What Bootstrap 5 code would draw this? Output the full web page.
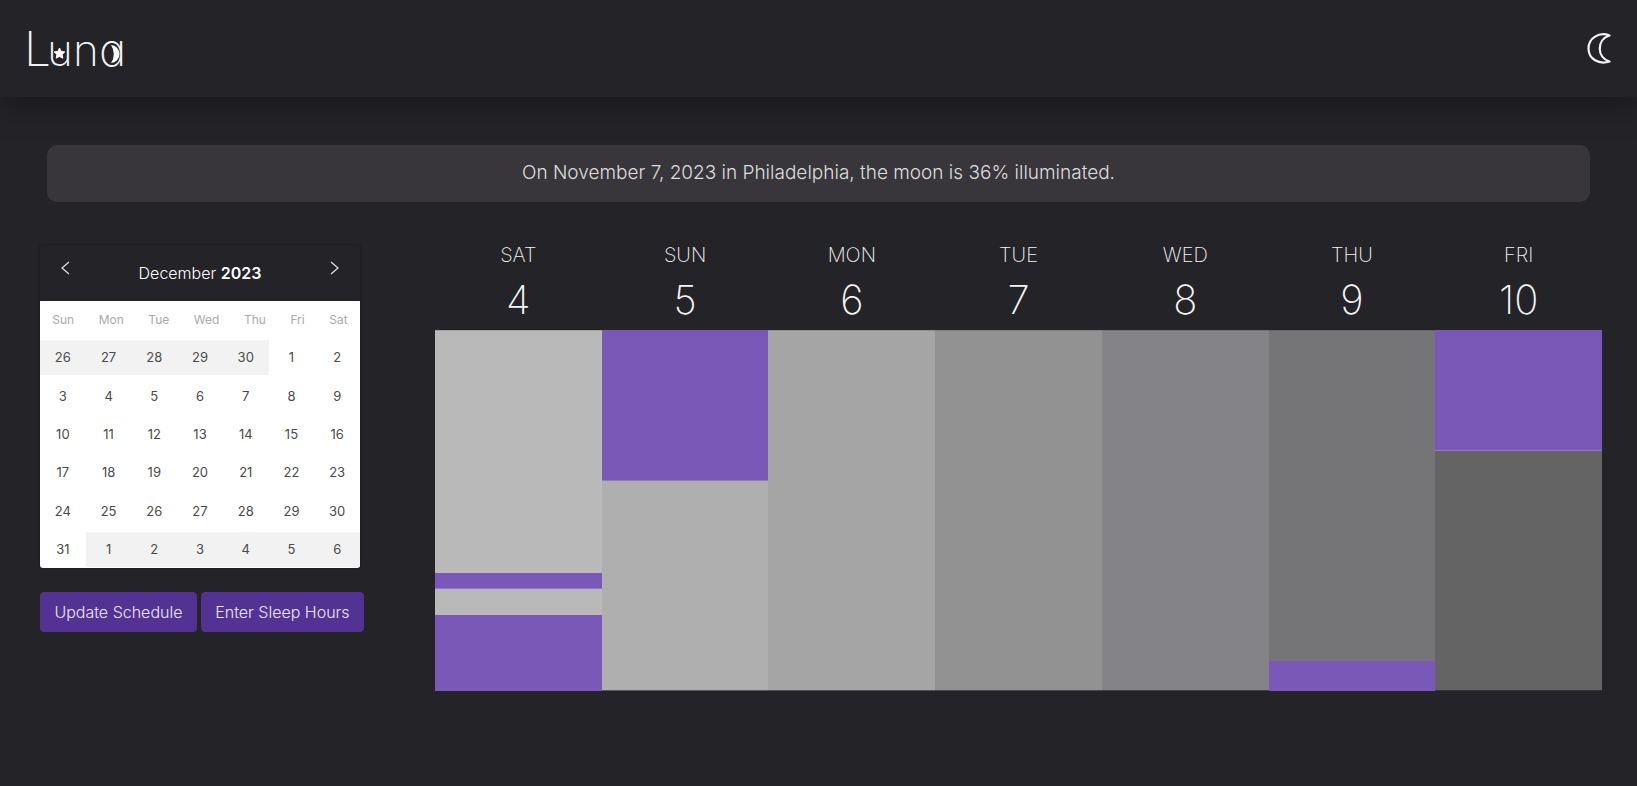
<!DOCTYPE html>
<html lang="en">
<head>
<meta charset="utf-8">
<meta name="viewport" content="width=device-width, initial-scale=1">
<title>Luna</title>
<link href="https://cdn.jsdelivr.net/npm/bootstrap@5.3.0/dist/css/bootstrap.min.css" rel="stylesheet">
<style>
  :root { --ink: #242328; --violet: #7958b7; }
  body { background: var(--ink); color: #f4f4f4; font-family: Inter, "Liberation Sans", sans-serif; }

  .topbar { height: 97px; padding: 0 24px; box-shadow: 0 4px 36px rgba(0, 0, 0, .4); background: var(--ink); }
  .theme-toggle { margin-right: -4px; }
  .brand-text { font-family: Inter, sans-serif; font-feature-settings: "cv11"; font-weight: 200; fill: #f2f2f2; }

  .notice { margin: 48px 47px 0; padding: 13px 14px 15px; border-radius: 10px; background: #38363b; font-size: 19px; line-height: 29px; font-weight: 300; color: #dedede; }

  .board { padding: 41px 35px 0 40px; gap: 71px; }
  .side { width: 324px; }
  .month { width: 320px; margin-top: 2px; border-radius: 3px; overflow: hidden; box-shadow: 0 0 2px rgba(0, 0, 0, .5); }
  .month-head { height: 56px; padding: 0 16px; }
  .month-head h2 { font-size: 16px; line-height: 20px; margin: 18px 0 0; font-weight: 300; color: #fff; }
  .month-head h2 b { font-weight: 600; }
  .arrow { width: 20px; height: 20px; margin-top: 13px; }

  .days, .days thead, .days tbody { display: block; width: 100%; }
  .days { background: #fff; color: #4a4a4a; font-size: 13px; line-height: 35px; text-align: center; }
  .days thead tr { display: flex; justify-content: space-around; height: 39px; }
  .days th { font-size: 12px; font-weight: 400; color: #aaa; }
  .days tbody tr { display: flex; height: 38px; }
  .days tbody tr:nth-child(3n + 1) { height: 39px; }
  .days tbody tr:last-child { height: 36px; }
  .days td { flex: 1 1 0; height: 35px; padding: 0; }
  .days .off { background: #f2f2f2; }

  .btn-luna { --bs-btn-bg: #523394; --bs-btn-border-color: #523394; --bs-btn-color: #ece6f5; --bs-btn-hover-bg: #6140a8; --bs-btn-hover-color: #fff;
    --bs-btn-padding-x: 12px; --bs-btn-padding-y: 9px; --bs-btn-border-radius: 4px; --bs-btn-line-height: 20px; font-size: 16px; font-weight: 300; white-space: nowrap; }

  .day-name { font-size: 20px; line-height: 24px; font-weight: 200; margin: 0; }
  .day-num { font-size: 40px; line-height: 48px; font-weight: 200; margin: 9px 0 6px; }
  .track { height: 361px; }
  .awake, .sleep { flex-basis: 0; }
  .awake { background: var(--tone); }
  .awake:first-child { border-top: 1px solid rgba(0, 0, 0, .12); }
  .awake:last-child { border-bottom: 1px solid rgba(0, 0, 0, .5); }
  .sleep { background: var(--violet); }
  .sleep:not(:last-child) { border-bottom: 1px solid rgba(255, 255, 255, .2); }
  .tone-1 { --tone: #b9b9b9; } .tone-2 { --tone: #afafaf; } .tone-3 { --tone: #a5a5a5; } .tone-4 { --tone: #929293; }
  .tone-5 { --tone: #848388; } .tone-6 { --tone: #757577; } .tone-7 { --tone: #646465; }
</style>
</head>
<body>
<header class="topbar d-flex align-items-center justify-content-between">
  <a href="#" class="d-block" aria-label="Luna home">
    <svg class="d-block" width="110" height="81" viewBox="0 0 110 81" role="img" aria-label="Luna">
      <g class="brand-text">
        <text x="0" y="58" font-size="48">L</text>
        <text x="23" y="58" font-size="44">u</text>
        <text x="49" y="58" font-size="44">n</text>
        <text x="75" y="58" font-size="46">a</text>
      </g>
      <path fill="#fff" stroke="#fff" stroke-linejoin="round" d="M35.500 40l1.600 3.400 3.700.5-2.700 2.600.7 3.700-3.300-1.800-3.300 1.800.7-3.700-2.700-2.600 3.700-.5z"/>
      <path fill="#fff" d="M87 37a8.500 9 0 0 1 0 18a14 15 0 0 0 0-18z"/>
    </svg>
  </a>
  <button type="button" class="theme-toggle btn p-0 border-0" aria-label="Toggle theme">
    <svg class="d-block" width="30" height="34" viewBox="0 0 30 34" fill="none" stroke="#f4f4f4" stroke-width="2.200" stroke-linejoin="round">
      <path d="M22.500 3.500C12-.5 1.500 6 1.500 16.500S12 33 22.500 29.500C9.500 25.500 9.500 7.500 22.500 3.500z"/>
    </svg>
  </button>
</header>

<main>
  <p class="notice text-center">On November 7, 2023 in Philadelphia, the moon is 36% illuminated.</p>

  <div class="board d-flex align-items-start">
    <section class="side flex-shrink-0">
      <div class="month">
        <div class="month-head d-flex justify-content-between align-items-start">
          <button type="button" class="btn p-0 border-0 arrow" aria-label="Previous month">
            <svg class="d-block" width="20" height="20" fill="none" stroke="#e4e4e4" stroke-width="1.200"><path d="M13 4L6 10l7 6"/></svg>
          </button>
          <h2>December <b>2023</b></h2>
          <button type="button" class="btn p-0 border-0 arrow" aria-label="Next month">
            <svg class="d-block" width="20" height="20" fill="none" stroke="#e4e4e4" stroke-width="1.200"><path d="M7 4l7 6-7 6"/></svg>
          </button>
        </div>
        <table class="days">
          <thead><tr><th>Sun</th><th>Mon</th><th>Tue</th><th>Wed</th><th>Thu</th><th>Fri</th><th>Sat</th></tr></thead>
          <tbody>
            <tr><td class="off">26</td><td class="off">27</td><td class="off">28</td><td class="off">29</td><td class="off">30</td><td>1</td><td>2</td></tr>
            <tr><td>3</td><td>4</td><td>5</td><td>6</td><td>7</td><td>8</td><td>9</td></tr>
            <tr><td>10</td><td>11</td><td>12</td><td>13</td><td>14</td><td>15</td><td>16</td></tr>
            <tr><td>17</td><td>18</td><td>19</td><td>20</td><td>21</td><td>22</td><td>23</td></tr>
            <tr><td>24</td><td>25</td><td>26</td><td>27</td><td>28</td><td>29</td><td>30</td></tr>
            <tr><td>31</td><td class="off">1</td><td class="off">2</td><td class="off">3</td><td class="off">4</td><td class="off">5</td><td class="off">6</td></tr>
          </tbody>
        </table>
      </div>
      <div class="d-flex gap-1 mt-4">
        <button type="button" class="btn btn-luna flex-fill">Update Schedule</button>
        <button type="button" class="btn btn-luna flex-fill">Enter Sleep Hours</button>
      </div>
    </section>

    <section class="row g-0 flex-grow-1 text-center">
      <div class="col tone-1"><h3 class="day-name">SAT</h3><p class="day-num">4</p>
        <div class="track d-flex flex-column"><div class="awake" style="flex-grow:243"></div><div class="sleep" style="flex-grow:15"></div><div class="awake" style="flex-grow:26"></div><div class="sleep" style="flex-grow:76"></div></div></div>
      <div class="col tone-2"><h3 class="day-name">SUN</h3><p class="day-num">5</p>
        <div class="track d-flex flex-column"><div class="sleep" style="flex-grow:151"></div><div class="awake" style="flex-grow:210"></div></div></div>
      <div class="col tone-3"><h3 class="day-name">MON</h3><p class="day-num">6</p>
        <div class="track d-flex flex-column"><div class="awake" style="flex-grow:361"></div></div></div>
      <div class="col tone-4"><h3 class="day-name">TUE</h3><p class="day-num">7</p>
        <div class="track d-flex flex-column"><div class="awake" style="flex-grow:361"></div></div></div>
      <div class="col tone-5"><h3 class="day-name">WED</h3><p class="day-num">8</p>
        <div class="track d-flex flex-column"><div class="awake" style="flex-grow:361"></div></div></div>
      <div class="col tone-6"><h3 class="day-name">THU</h3><p class="day-num">9</p>
        <div class="track d-flex flex-column"><div class="awake" style="flex-grow:331"></div><div class="sleep" style="flex-grow:30"></div></div></div>
      <div class="col tone-7"><h3 class="day-name">FRI</h3><p class="day-num">10</p>
        <div class="track d-flex flex-column"><div class="sleep" style="flex-grow:121"></div><div class="awake" style="flex-grow:240"></div></div></div>
    </section>
  </div>
</main>
<script src="https://cdn.jsdelivr.net/npm/bootstrap@5.3.0/dist/js/bootstrap.bundle.min.js"></script>
</body>
</html>
